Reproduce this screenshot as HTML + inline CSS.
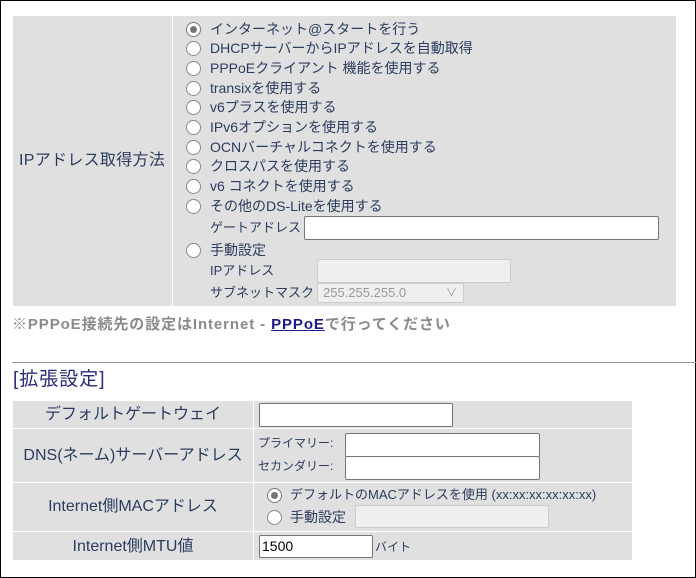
<!DOCTYPE html>
<html><head><meta charset="utf-8"><style>
*{margin:0;padding:0;box-sizing:border-box}
body{width:696px;height:578px;overflow:hidden;background:#fff;font-family:"Liberation Sans","Noto Sans CJK JP",sans-serif;color:#2b3c5e;position:relative}
#frame{position:absolute;left:0;top:0;width:696px;height:578px;border:1px solid #000}
.a{position:absolute;white-space:nowrap}
.bg{position:absolute;background:#e0e0e0}
.r{position:absolute;width:15px;height:15px;border-radius:50%;border:1px solid #888;background:#fff}
.r.on::after{content:"";position:absolute;left:3px;top:3px;width:7px;height:7px;border-radius:50%;background:#767676}
.r.on{border-color:#777}
.t{font-size:14px;line-height:16px}
.in{position:absolute;background:#fff;border:1px solid #767676;border-radius:2px}
.dis{position:absolute;background:#efefef;border:1px solid #ccc;border-radius:2px}
</style></head><body>
<div id="frame"></div>
<div class="bg" style="left:13px;top:16px;width:159px;height:290px"></div>
<div class="bg" style="left:173px;top:16px;width:503px;height:290px"></div>
<div class="a" style="left:19px;top:151px;font-size:16px;line-height:20px;letter-spacing:0.3px">IPアドレス取得方法</div>

<div class="r on" style="left:186px;top:22px"></div><div class="a t" style="left:210px;top:21px">インターネット@スタートを行う</div>
<div class="r" style="left:186px;top:41px"></div><div class="a t" style="left:210px;top:40px">DHCPサーバーからIPアドレスを自動取得</div>
<div class="r" style="left:186px;top:61px"></div><div class="a t" style="left:210px;top:60px">PPPoEクライアント 機能を使用する</div>
<div class="r" style="left:186px;top:81px"></div><div class="a t" style="left:210px;top:80px">transixを使用する</div>
<div class="r" style="left:186px;top:100px"></div><div class="a t" style="left:210px;top:99px">v6プラスを使用する</div>
<div class="r" style="left:186px;top:120px"></div><div class="a t" style="left:210px;top:119px">IPv6オプションを使用する</div>
<div class="r" style="left:186px;top:140px"></div><div class="a t" style="left:210px;top:139px">OCNバーチャルコネクトを使用する</div>
<div class="r" style="left:186px;top:159px"></div><div class="a t" style="left:210px;top:158px">クロスパスを使用する</div>
<div class="r" style="left:186px;top:179px"></div><div class="a t" style="left:210px;top:178px">v6 コネクトを使用する</div>
<div class="r" style="left:186px;top:199px"></div><div class="a t" style="left:210px;top:198px">その他のDS-Liteを使用する</div>
<div class="a" style="left:210px;top:220px;font-size:13px;line-height:16px">ゲートアドレス</div>
<div class="in" style="left:304px;top:216px;width:355px;height:24px"></div>
<div class="r" style="left:186px;top:243px"></div><div class="a t" style="left:210px;top:242px">手動設定</div>
<div class="a" style="left:210px;top:263px;font-size:13px;line-height:16px">IPアドレス</div>
<div class="dis" style="left:317px;top:259px;width:194px;height:24px"></div>
<div class="a" style="left:210px;top:285px;font-size:13px;line-height:16px">サブネットマスク</div>
<div class="dis" style="left:317px;top:283px;width:147px;height:20px;font-size:13px;color:#999;padding:1px 5px;line-height:16px">255.255.255.0<span style="position:absolute;right:6px;top:1px;font-size:11px">&#8744;</span></div>

<div class="a" style="left:12px;top:315px;font-size:15px;line-height:19px;color:#8a8a8a;font-weight:bold;letter-spacing:0.9px">※PPPoE接続先の設定はInternet - <span style="color:#1a1a8a;text-decoration:underline">PPPoE</span>で行ってください</div>
<div class="a" style="left:12px;top:362px;width:684px;height:1px;background:#999"></div>
<div class="a" style="left:13px;top:369px;font-size:19px;line-height:22px;color:#2b2b7a;letter-spacing:1px">[拡張設定]</div>

<div class="bg" style="left:13px;top:401px;width:240px;height:27px"></div>
<div class="bg" style="left:254px;top:401px;width:378px;height:27px"></div>
<div class="bg" style="left:13px;top:429px;width:240px;height:53px"></div>
<div class="bg" style="left:254px;top:429px;width:378px;height:53px"></div>
<div class="bg" style="left:13px;top:483px;width:240px;height:48px"></div>
<div class="bg" style="left:254px;top:483px;width:378px;height:48px"></div>
<div class="bg" style="left:13px;top:532px;width:240px;height:28px"></div>
<div class="bg" style="left:254px;top:532px;width:378px;height:28px"></div>

<div class="a" style="left:13px;width:240px;text-align:center;top:405px;font-size:16px;line-height:20px">デフォルトゲートウェイ</div>
<div class="a" style="left:13px;width:240px;text-align:center;top:446px;font-size:16px;line-height:20px">DNS(ネーム)サーバーアドレス</div>
<div class="a" style="left:13px;width:240px;text-align:center;top:497px;font-size:16px;line-height:20px">Internet側MACアドレス</div>
<div class="a" style="left:13px;width:240px;text-align:center;top:537px;font-size:16px;line-height:20px">Internet側MTU値</div>

<div class="in" style="left:259px;top:403px;width:194px;height:24px"></div>
<div class="a" style="left:258px;top:436px;font-size:12px;line-height:15px">プライマリー:</div>
<div class="in" style="left:345px;top:433px;width:195px;height:24px"></div>
<div class="a" style="left:258px;top:459px;font-size:12px;line-height:15px">セカンダリー:</div>
<div class="in" style="left:345px;top:456px;width:195px;height:24px"></div>
<div class="r on" style="left:267px;top:488px"></div><div class="a" style="left:290px;top:487px;font-size:13px;line-height:16px">デフォルトのMACアドレスを使用 (xx:xx:xx:xx:xx:xx)</div>
<div class="r" style="left:267px;top:510px"></div><div class="a t" style="left:290px;top:509px">手動設定</div>
<div class="dis" style="left:355px;top:505px;width:194px;height:23px"></div>
<div class="in" style="left:259px;top:535px;width:114px;height:23px;color:#000;font-size:14px;padding:2px 2px;line-height:17px">1500</div>
<div class="a" style="left:375px;top:540px;font-size:12px;line-height:15px">バイト</div>
</body></html>
